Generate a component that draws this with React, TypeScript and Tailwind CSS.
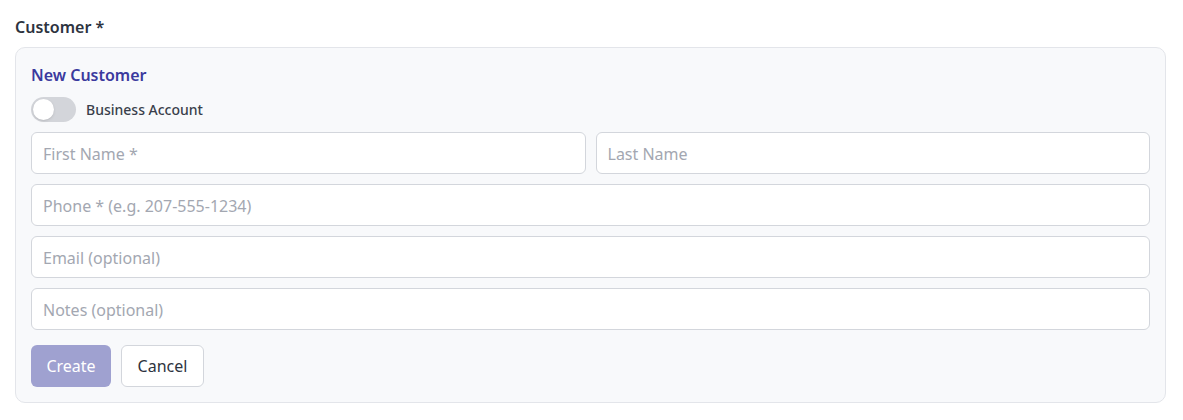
export default function App() {
  return (
    <div className="min-h-[420px] bg-white px-[15px] pt-[15px] font-['Segoe_UI','Noto_Sans',sans-serif]">
      <label className="block text-[16px] font-semibold leading-6 text-[#2d3340]">Customer *</label>
      <div className="mt-[8px] w-[1151px] rounded-[10px] border border-[#e3e5ea] bg-[#f8f9fb] px-[15px] pt-[15px] pb-[15px]">
        <h3 className="text-[16px] font-semibold leading-6 text-[#3b3a9e]">New Customer</h3>
        <div className="mt-[10px] flex items-center gap-[10px]">
          <button
            type="button"
            className="flex h-[25px] w-[45px] items-center rounded-full bg-[#d3d5da] px-[2px]"
          >
            <span className="block h-[21px] w-[21px] rounded-full bg-white shadow-sm" />
          </button>
          <span className="text-[14px] font-medium text-[#3a3f4b]">Business Account</span>
        </div>
        <div className="mt-[10px] flex flex-col gap-[10px]">
          <div className="grid grid-cols-2 gap-[10px]">
            <input
              placeholder="First Name *"
              className="h-[42px] rounded-[6px] border border-[#d3d6dc] bg-white px-[11px] pt-[1px] text-[16px] text-[#374151] outline-none placeholder:text-[#a3a7b1]"
            />
            <input
              placeholder="Last Name"
              className="h-[42px] rounded-[6px] border border-[#d3d6dc] bg-white px-[11px] pt-[1px] text-[16px] text-[#374151] outline-none placeholder:text-[#a3a7b1]"
            />
          </div>
          <input
            placeholder="Phone * (e.g. 207-555-1234)"
            className="h-[42px] rounded-[6px] border border-[#d3d6dc] bg-white px-[11px] pt-[1px] text-[16px] text-[#374151] outline-none placeholder:text-[#a3a7b1]"
          />
          <input
            placeholder="Email (optional)"
            className="h-[42px] rounded-[6px] border border-[#d3d6dc] bg-white px-[11px] pt-[1px] text-[16px] text-[#374151] outline-none placeholder:text-[#a3a7b1]"
          />
          <input
            placeholder="Notes (optional)"
            className="h-[42px] rounded-[6px] border border-[#d3d6dc] bg-white px-[11px] pt-[1px] text-[16px] text-[#374151] outline-none placeholder:text-[#a3a7b1]"
          />
        </div>
        <div className="mt-[15px] flex gap-[10px]">
          <button
            type="button"
            className="h-[42px] w-[80px] rounded-[6px] bg-[#9fa1d0] text-[16px] text-white"
          >
            Create
          </button>
          <button
            type="button"
            className="h-[42px] w-[83px] rounded-[6px] border border-[#d3d6dc] bg-white text-[16px] text-[#2d3340]"
          >
            Cancel
          </button>
        </div>
      </div>
    </div>
  );
}
